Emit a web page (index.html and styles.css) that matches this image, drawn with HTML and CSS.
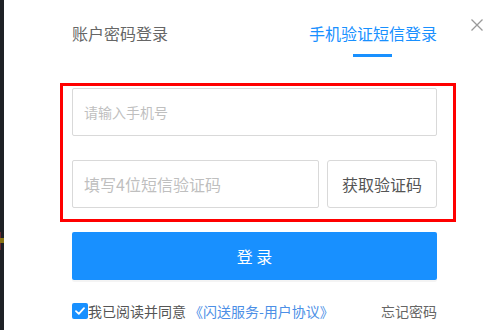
FILE: index.html
```html
<!DOCTYPE html>
<html lang="zh-CN">
<head>
<meta charset="utf-8">
<title>登录</title>
<link rel="stylesheet" href="styles.css">
</head>
<body>
<div class="page">
  <div class="edge"><span class="mark-red"></span><span class="mark-yellow"></span></div>
  <div class="dialog">
    <button class="close" aria-label="关闭">
      <svg width="12" height="12" viewBox="0 0 12 12"><path d="M0.5 0.5 L11.5 11.5 M11.5 0.5 L0.5 11.5" stroke="#9a9a9a" stroke-width="1.3" fill="none"/></svg>
    </button>
    <div class="tabs">
      <div class="tab">账户密码登录</div>
      <div class="tab active">手机验证短信登录</div>
    </div>
    <div class="highlight">
      <input class="field" type="text" placeholder="请输入手机号">
      <div class="code-row">
        <input class="field code" type="text" placeholder="填写4位短信验证码">
        <button class="get-code">获取验证码</button>
      </div>
    </div>
    <button class="submit">登 录</button>
    <div class="footer">
      <label class="agree">
        <span class="check"><svg width="10" height="8" viewBox="0 0 10 8"><path d="M1 4.2 L3.8 6.8 L9 1.2" stroke="#fff" stroke-width="1.8" fill="none" stroke-linecap="round" stroke-linejoin="round"/></svg></span>
        <span class="agree-text">我已阅读并同意</span><a class="link">《闪送服务-用户协议》</a>
      </label>
      <a class="forgot">忘记密码</a>
    </div>
  </div>
</div>
</body>
</html>
```

FILE: styles.css
```css
* { box-sizing: border-box; }
html, body { margin: 0; padding: 0; background: #fff; }
body {
  width: 500px;
  height: 330px;
  overflow: hidden;
  font-family: "Noto Sans CJK SC", "Noto Sans", sans-serif;
}
.page {
  display: flex;
  height: 330px;
}
.edge {
  width: 4px;
  background: #1e2125;
  position: relative;
}
.mark-red {
  position: absolute;
  left: 0;
  top: 232px;
  width: 1px;
  height: 18px;
  background: #6a2a30;
}
.mark-yellow {
  position: absolute;
  left: 0;
  top: 238px;
  width: 4px;
  height: 5px;
  background: #8a7414;
}
.dialog {
  position: relative;
  flex: 0 0 auto;
  width: 365px;
  margin-left: 68px;
  padding-top: 21px;
}
.close {
  position: absolute;
  top: 19px;
  left: 399px;
  width: 12px;
  height: 12px;
  padding: 0;
  border: 0;
  background: none;
  display: block;
}
.close svg { display: block; }
.tabs {
  display: flex;
  justify-content: space-between;
  align-items: flex-start;
}
.tab {
  font-size: 16px;
  line-height: 24px;
  color: #666;
  display: flex;
  flex-direction: column;
  align-items: center;
}
.tab.active { color: #1890ff; }
.tab.active::after {
  content: "";
  width: 39px;
  height: 3px;
  margin-top: 9px;
  background: #1890ff;
}
.highlight {
  margin: 26px -19px 0 -12px;
  padding: 2px 16px 11px 9px;
  border: 3px solid #ff0000;
}
.field {
  display: block;
  width: 365px;
  height: 48px;
  margin: 0;
  padding: 0 11px;
  border: 1px solid #d9d9d9;
  border-radius: 2px;
  background: #fff;
  font-family: inherit;
  font-size: 14px;
  color: #333;
  outline: none;
}
.field::placeholder { color: #bfbfbf; }
.code-row {
  display: flex;
  gap: 8px;
  margin-top: 24px;
}
.field.code {
  width: 247px;
  font-size: 16px;
}
.get-code {
  width: 110px;
  height: 48px;
  padding: 0;
  border: 1px solid #d9d9d9;
  border-radius: 3px;
  background: #fff;
  font-family: inherit;
  font-size: 16px;
  color: #555;
}
.submit {
  display: block;
  width: 365px;
  height: 48px;
  margin-top: 10px;
  padding: 0;
  border: 0;
  border-radius: 2px;
  background: #1890ff;
  box-shadow: 0 2px 0 rgba(0, 0, 0, 0.045);
  color: #fff;
  font-family: inherit;
  font-size: 16px;
  white-space: pre;
}
.footer {
  margin-top: 21px;
  height: 20px;
  display: flex;
  justify-content: space-between;
  align-items: center;
  font-size: 14px;
  line-height: 20px;
}
.agree {
  display: flex;
  align-items: center;
  color: #555;
}
.check {
  width: 16px;
  height: 16px;
  border-radius: 2px;
  background: #1890ff;
  display: flex;
  align-items: center;
  justify-content: center;
}
.check svg { display: block; }
.link { color: #4c8fe6; margin-left: 3px; }
.forgot { color: #666; }
```
